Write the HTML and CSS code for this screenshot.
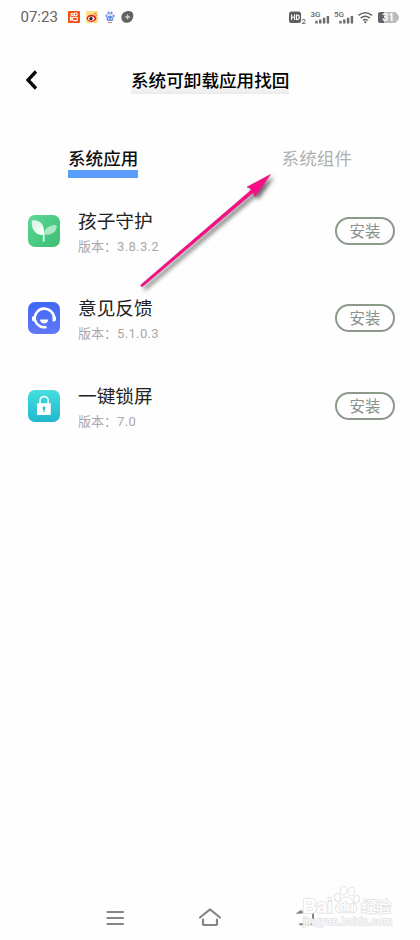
FILE: index.html
```html
<!DOCTYPE html>
<html lang="zh-CN">
<head>
<meta charset="utf-8">
<title>系统可卸载应用找回</title>
<link rel="stylesheet" href="styles.css">
</head>
<body>
<div class="phone">
  <div class="status">
    <span class="time">07:23</span>
    <svg class="notices" width="68" height="16" viewBox="0 0 68 16">
      <rect x="0" y="2" width="12" height="12" rx="1" fill="#f45214"/>
      <g fill="none" stroke="#fff" stroke-width="1.1"><circle cx="4.2" cy="5.4" r="1.2"/><circle cx="7.7" cy="5.2" r="1.5"/><rect x="4.6" y="8.2" width="4.8" height="3.4" rx="1"/><path d="M4.4 9 2.6 8.2v3l1.8-.8"/></g>
      <rect x="18" y="2" width="12" height="12" rx="1" fill="#ffdf83"/>
      <ellipse cx="23.5" cy="9.3" rx="4.8" ry="3.6" fill="#d92525"/><ellipse cx="23.2" cy="9.6" rx="3.2" ry="2.1" fill="#fff"/><circle cx="23" cy="9.6" r="1.7" fill="#222"/>
      <path d="M25.5 4.2q3-.4 3 3" fill="none" stroke="#e8792f" stroke-width="1"/>
      <g fill="#6790df"><ellipse cx="38.5" cy="7" rx="1" ry="1.4"/><ellipse cx="40.6" cy="4" rx="1.1" ry="1.6"/><ellipse cx="43.400" cy="4" rx="1.1" ry="1.6"/><ellipse cx="45.5" cy="7" rx="1" ry="1.4"/><path d="M42 6.500c1.400 0 3.500 2.300 3.500 3.700 0 1.900-2 1.700-3.500 1.700s-3.500.2-3.500-1.700c0-1.400 2.100-3.700 3.500-3.700z"/></g>
      <path d="M40 9.900h1.500m1.300 0h1.500" stroke="#fff" stroke-width="1"/>
      <path d="M40 13.500h4" stroke="#f17878" stroke-width="1"/>
      <path d="M59 2.200c4-.6 6.500 1 6.300 4.400-.2 4.200-2.500 7.200-6.200 7.200-3.500 0-5.700-2.200-5.700-5.300 0-3.300 2.300-5.900 5.600-6.300z" fill="#626262"/>
      <path d="M59.600 5l1 2 2.200 1-2.200 1-1 2-1-2-2.200-1 2.200-1z" fill="#ccc"/>
    </svg>
    <svg class="signals" width="112" height="18" viewBox="0 0 112 18">
      <rect x="0" y="2.500" width="12" height="11.500" rx="2.500" fill="#5f5f5f"/>
      <path d="M2.600 5.500V11M5.600 5.500V11M2.600 8.200h3M7.500 6v4.500h1c2.300 0 2.300-4.500 0-4.500z" fill="none" stroke="#fff" stroke-width="1.100"/>
      <text class="tiny" x="12.500" y="14.500" font-size="7.500">2</text>
      <text class="tiny" x="21.400" y="7.800" font-size="8">3G</text>
      <text class="tiny" x="45" y="7.800" font-size="8">5G</text>
      <path d="M27.500 11.700v2.800M31.300 10.500v4M35.100 8.800v5.700M38.900 7v7.500M51.500 11.700v2.800M55.300 10.500v4M59.100 8.800v5.700M62.900 7v7.500" stroke="#6b6b6b" stroke-width="2.400"/>
      <path d="M69.500 6.400q6.800-5.300 13.600 0M71.700 9.100q4.600-3.600 9.200 0M73.900 11.500q2.400-1.800 4.800 0" fill="none" stroke="#666" stroke-width="1.500"/><circle cx="76.300" cy="13.200" r="1.100" fill="#666"/>
      <path d="M91.500 3H106a2 2 0 0 1 2 2q2 .5 2 3.500t-2 3.500a2 2 0 0 1-2 2H91.500a2.500 2.500 0 0 1-2.500-2.500v-6A2.500 2.500 0 0 1 91.500 3z" fill="#bcbcbc"/>
      <path d="M95 3h-3.500A2.500 2.500 0 0 0 89 5.500v6a2.500 2.500 0 0 0 2.500 2.500H95z" fill="#656565"/>
      <text x="93.300" y="12.400" class="battery" font-size="10.500">31</text>
    </svg>
  </div>
  <header class="header">
    <svg class="back" width="14" height="20" viewBox="0 0 14 20"><path d="M11 1.500 3 10l8 8.500" fill="none" stroke="#0a0a0a" stroke-width="3.300"/></svg>
    <h1 class="title">系统可卸载应用找回</h1>
  </header>
  <nav class="tabs">
    <span class="tab active">系统应用</span>
    <span class="tab">系统组件</span>
  </nav>
  <main class="list">
    <section class="row">
      <svg class="icon" viewBox="0 0 32 32">
        <defs><linearGradient id="green" x2="1" y2="1"><stop stop-color="#5bd897"/><stop offset="1" stop-color="#3dbe70"/></linearGradient><linearGradient id="leaf" x2="1" y2="1"><stop stop-color="#fff" stop-opacity=".75"/><stop offset="1" stop-color="#fff"/></linearGradient></defs>
        <rect width="32" height="32" rx="7" fill="url(#green)"/>
        <path d="M16 19c.5-5.500 4.500-9 12.500-9 1 5.500-3.500 10.500-12.500 9.500z" fill="#a9e9c5"/>
        <path d="M3.800 5.200C12 4.500 17 9 16 20 7 20.500 3 14 3.800 5.200z" fill="url(#leaf)"/>
        <path d="M15.700 18v8.500" stroke="#fff" stroke-width="1.500"/>
      </svg>
      <div class="info"><div class="name">孩子守护</div><div class="version">版本：<span class="num">3.8.3.2</span></div></div>
      <button class="install">安装</button>
    </section>
    <section class="row">
      <svg class="icon" viewBox="0 0 32 32">
        <defs><linearGradient id="blue" x2="0" y2="1"><stop stop-color="#4167f7"/><stop offset="1" stop-color="#6077f7"/></linearGradient></defs>
        <rect width="32" height="32" rx="7" fill="url(#blue)"/>
        <path d="M6.800 17A9.600 9.600 0 0 1 26 15.500M7 18a9.600 9.600 0 0 0 11.500 7" fill="none" stroke="#fff" stroke-width="2.600"/>
        <path d="M4 14.500h4v5H6a2 2 0 0 1-2-2zM24.500 14.500H28v3a2 2 0 0 1-2 2h-1.500z" fill="#fff"/>
        <path d="M12 17.500h8.200c-.3 2.600-1.800 4-4.100 4s-3.800-1.400-4.100-4z" fill="#fff"/>
      </svg>
      <div class="info"><div class="name">意见反馈</div><div class="version">版本：<span class="num">5.1.0.3</span></div></div>
      <button class="install">安装</button>
    </section>
    <section class="row">
      <svg class="icon" viewBox="0 0 32 32">
        <defs><linearGradient id="cyan" x2="0" y2="1"><stop stop-color="#46dfdd"/><stop offset="1" stop-color="#20b7cf"/></linearGradient></defs>
        <rect width="32" height="32" rx="7" fill="url(#cyan)"/>
        <path d="M12 14v-3.500a4.100 4.100 0 0 1 8.200 0V14" fill="none" stroke="#fff" stroke-width="1.500"/>
        <rect x="9" y="13.300" width="13.800" height="11.700" rx=".7" fill="#fff"/>
        <circle cx="16" cy="18" r="1.500" fill="#26bacf"/><path d="M16 18v4" stroke="#26bacf" stroke-width="1.200"/>
      </svg>
      <div class="info"><div class="name">一键锁屏</div><div class="version">版本：<span class="num">7.0</span></div></div>
      <button class="install">安装</button>
    </section>
  </main>
  <footer class="navbar">
    <svg width="20" height="18" viewBox="0 0 20 18"><path d="M2.500 3H18M2.500 9H18M2.500 15H18" stroke="#858585" stroke-width="2.200" stroke-linecap="round"/></svg>
    <svg width="26" height="20" viewBox="0 0 26 20"><path d="M3 9.500 13 1.500l10 8M6 11.500v4q0 1.500 1.500 1.500h11q1.500 0 1.500-1.500v-4" fill="none" stroke="#858585" stroke-width="2.200" stroke-linecap="round"/></svg>
    <svg width="20" height="18" viewBox="0 0 20 18"><path d="M5 3.200h13V15.200H4.200" fill="none" stroke="#858585" stroke-width="2"/><path d="M.5 4.800 6.500.5v4.300z" fill="#858585"/></svg>
  </footer>
  <svg class="arrow" width="150" height="140" viewBox="0 0 150 140">
    <defs><filter id="shade" x="-20%" y="-20%" width="150%" height="150%"><feDropShadow dx="3" dy="3" stdDeviation="2" flood-color="#000" flood-opacity=".6"/></filter></defs>
    <path d="M10.400 123.700Q8.500 123.600 9 121.700L119.200 27l-.7-1.600L115 24 138.500 11.500 123 33.500 121.300 29.500z" fill="#fd0786" stroke="#b51068" stroke-width=".5" filter="url(#shade)"/>
  </svg>
  <svg class="watermark" width="100" height="50" viewBox="0 0 100 50">
    <g class="mark">
      <ellipse cx="36.500" cy="17.500" rx="3" ry="4" transform="rotate(-20 36.500 17.500)"/><ellipse cx="42.500" cy="10.500" rx="3.100" ry="4.400"/><ellipse cx="50.500" cy="11.500" rx="3.100" ry="4.300" transform="rotate(14 50.500 11.500)"/><ellipse cx="55.500" cy="19" rx="3" ry="3.800" transform="rotate(20 55.500 19)"/>
      <path d="M46 17c4 0 5 4 8 7s3 9-3 9c-3 0-7-.5-10 0-6 .5-8-4-5-8 3-3 5-8 10-8z"/>
      <text class="brand" x="1.500" y="33" font-size="20" textLength="30">Bai</text>
      <text class="brand" x="38" y="31" font-size="13" textLength="15">du</text>
      <text class="brand-cn" x="60" y="32" font-size="15" textLength="30">经验</text>
      <text class="site" x="2" y="45" font-size="10.500" textLength="89">jingyan.baidu.com</text>
    </g>
  </svg>
</div>
</body>
</html>
```
FILE: styles.css
```css
* { box-sizing: border-box; }
body { margin: 0; background: #fefefe; font-family: Roboto, "Noto Sans CJK SC", sans-serif; }
.phone { position: relative; width: 420px; height: 940px; overflow: hidden; display: flex; flex-direction: column; }
.status { height: 35px; display: flex; align-items: center; padding: 0 19px 0 20.5px; }
.time { width: 47.5px; font-size: 15px; line-height: 35px; color: #626262; }
.notices { margin-bottom: 1px; }
.signals { margin-left: auto; }
.tiny { fill: #666; font-weight: 500; }
.battery { fill: #fff; font-weight: 700; }
.header { height: 90px; display: flex; align-items: center; padding-left: 25px; }
.back { margin-right: 92px; }
.title { margin: 0; font-family: "Noto Sans CJK SC", sans-serif; font-size: 17.6px; line-height: 26px; height: 27px; font-weight: 500; color: #000; background: linear-gradient(#fefefe 50%, #ebebeb); }
.tabs { height: 62px; display: flex; padding: 20px 68px 0; justify-content: space-between; align-items: flex-start; }
.tab { height: 33px; line-height: 28px; font-size: 17.6px; color: #b0b0b0; }
.tab.active { color: #111; font-weight: 500; border-bottom: 8px solid #5b9dfa; }
.list { flex: 1; }
.row { height: 87.5px; display: flex; align-items: center; padding: 0 25px 0 28px; }
.icon { width: 32px; height: 32px; margin-right: 18px; }
.info { flex: 1; padding-top: 3px; }
.name { font-size: 18.7px; line-height: 28px; color: #222; }
.version { font-size: 13px; line-height: 21px; color: #a9a9a9; }
.num { letter-spacing: .35px; }
.install { width: 60px; height: 28px; padding: 0; border: 2px solid #8c998b; border-radius: 14px; background: #fefefe; color: #8a928a; font: 15.4px/22px "Noto Sans CJK SC", sans-serif; padding-bottom: 2px; }
.navbar { height: 45px; display: flex; justify-content: space-between; align-items: center; padding: 0 105px; }
.arrow { position: absolute; left: 132px; top: 163px; }
.watermark { position: absolute; left: 301px; top: 880px; }
.mark { fill: #fff; stroke: #e2e2e2; stroke-width: 1px; }
.mark text { paint-order: stroke; stroke-width: 1.6px; }
.brand { font-family: "Liberation Sans", sans-serif; font-weight: 700; }
.brand-cn { font-family: "Noto Sans CJK SC", sans-serif; font-weight: 500; }
.site { font-family: "Liberation Sans", sans-serif; }
```
